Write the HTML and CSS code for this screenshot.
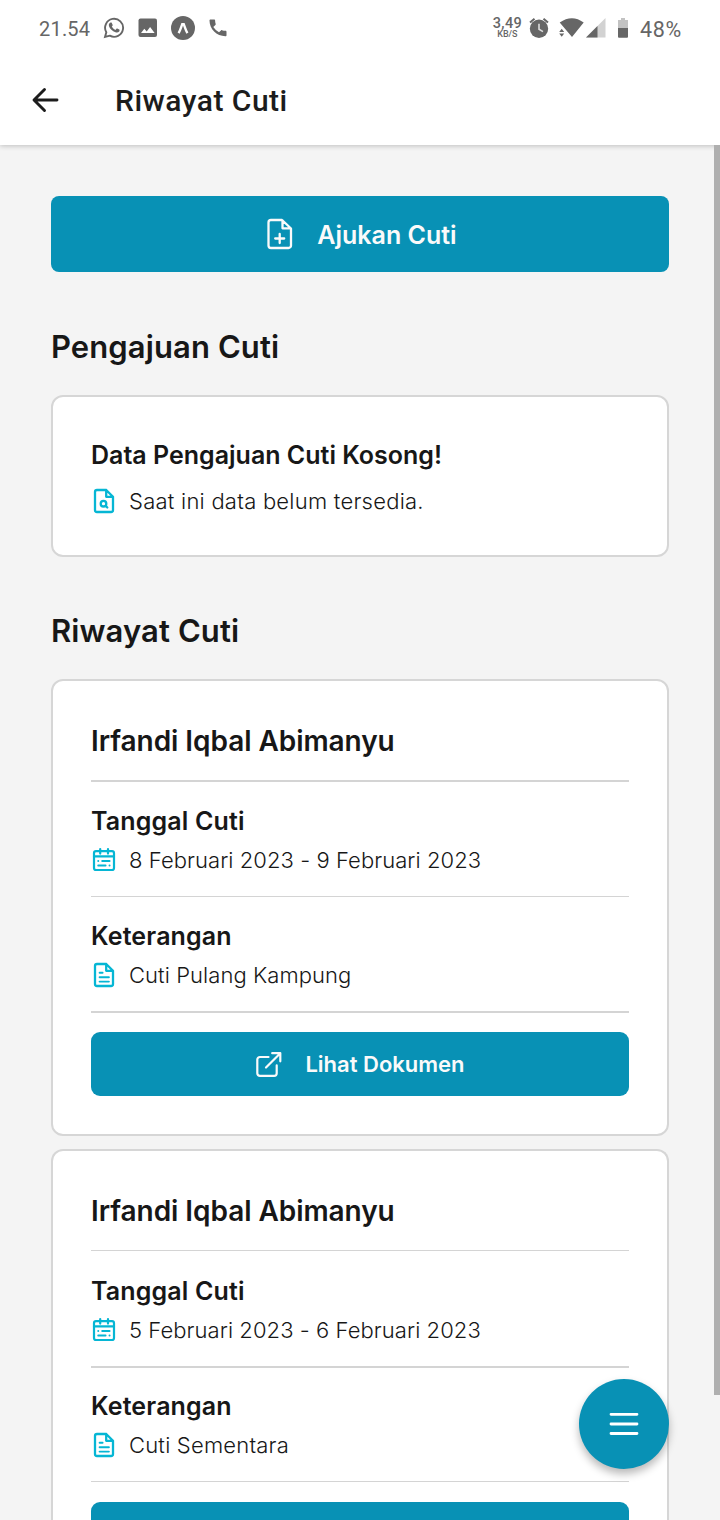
FILE: index.html
```html
<!DOCTYPE html>
<html lang="id">
<head>
<meta charset="utf-8">
<title>Riwayat Cuti</title>
<link rel="stylesheet" href="styles.css">
</head>
<body>
<svg class="defs" width="0" height="0">
  <symbol id="i-calendar" viewBox="0 0 26 26">
    <g fill="none" stroke="currentColor" stroke-width="2.2" stroke-linecap="round" stroke-linejoin="round">
      <rect x="3" y="4.2" width="20" height="18.8" rx="2"/>
      <path d="M3 9.3h20M9.2 2v4.6M17 2v4.6"/>
      <path stroke-width="1.9" d="M7.2 14h.1M11.2 14h7.4M7.2 18.5h7.4M18.5 18.5h.1"/>
    </g>
  </symbol>
  <symbol id="i-doc" viewBox="0 0 26 26">
    <g fill="none" stroke="currentColor" stroke-width="2.3" stroke-linecap="round" stroke-linejoin="round">
      <path d="M15.2 2H6a2 2 0 0 0-2 2v18a2 2 0 0 0 2 2h14a2 2 0 0 0 2-2V8.800zM15.200 2v6.800H22"/>
      <path stroke-width="1.9" d="M8.6 10.7h3M8.6 15.2h9.300M8.6 19.6h9.300"/>
    </g>
  </symbol>
  <symbol id="i-search-doc" viewBox="0 0 26 26">
    <g fill="none" stroke="currentColor" stroke-width="2.3" stroke-linecap="round" stroke-linejoin="round">
      <path d="M15.2 2H6a2 2 0 0 0-2 2v18a2 2 0 0 0 2 2h14a2 2 0 0 0 2-2V8.800zM15.200 2v6.800H22"/>
      <circle cx="12.5" cy="15.7" r="2.8"/><path d="M14.6 17.8l1.700 1.700"/>
    </g>
  </symbol>
  <symbol id="i-external" viewBox="0 0 28 28">
    <path fill="none" stroke="currentColor" stroke-width="2.2" stroke-linecap="round" stroke-linejoin="round" d="M13.500 7H4.900a2.600 2.600 0 0 0-2.600 2.600v13.700a2.600 2.600 0 0 0 2.600 2.600h14.200a2.600 2.600 0 0 0 2.600-2.600V15.400M11 17.500L25.300 3.200M17.200 3.200h8.100v8.100"/>
  </symbol>
</svg>

<div class="statusbar">
  <span class="clock">21.54</span>
  <svg class="st-wa" width="22" height="22" viewBox="0 0 22 22"><path d="M2 20l1.300-4.700A9 9 0 1 1 6.800 18.700z" fill="none" stroke="#666" stroke-width="1.900"/><path fill="#666" d="M7.500 5.600c.5-.3 1.100-.2 1.300.3l.9 2c.1.400 0 .7-.9 1.700.8 1.600 2 2.700 3.600 3.400l1.100-1.300c.2-.2.5-.3.800-.1l1.900.9c.6.300.5 1.200 0 1.900-.8 1-2.200 1.300-3.700.8-3.200-1-5.500-3.200-6.500-5.900-.5-1.500 0-3 1.500-3.700z"/></svg>
  <svg class="st-img" width="20" height="20" viewBox="0 0 20 20"><rect x=".5" y=".5" width="18.500" height="18.500" rx="2" fill="#666"/><path fill="#fff" d="M3 15l3.300-4.300 2.400 2.800 3.400-4.500 4.500 6z"/></svg>
  <svg class="st-expo" width="24" height="24" viewBox="0 0 24 24"><circle cx="12" cy="12" r="12" fill="#666"/><path d="M7.600 17.200C9 15 10 11.500 11.200 8.300h1.600c1.200 3.200 2.200 6.700 3.600 8.900" fill="none" stroke="#fff" stroke-width="2.400"/></svg>
  <svg class="st-phone" width="18" height="18" viewBox="0 0 18 18"><path fill="#666" d="M1.500.5h3.600c.6 0 1 .4 1 1 0 1.200.2 2.400.6 3.500.1.400 0 .8-.3 1L4.300 8.100a15 15 0 0 0 5.700 5.200l2-1.900c.3-.3.700-.4 1-.2 1.100.4 2.300.5 3.500.5.600 0 1 .5 1 1v3.500c0 .6-.4 1-1 1C7.500 17.200.5 10 .5 1.500c0-.6.500-1 1-1z"/></svg>
  <span class="spring"></span>
  <span class="speed"><b>3,49</b><small>KB/S</small></span>
  <svg class="st-alarm" width="20" height="22" viewBox="0 0 20 22"><circle cx="10" cy="11.800" r="9.200" fill="#666"/><path d="M1 5.500L5.500 1.800M19 5.500l-4.500-3.700" stroke="#666" stroke-width="2"/><path d="M10 6.800v5.500l4 2.300" fill="none" stroke="#ddd" stroke-width="1.600"/></svg>
  <svg class="st-wifi" width="25" height="20" viewBox="0 0 25 20"><path fill="#666" d="M.700 4.600Q13 -4.200 24.700 4.600L13 19zM.2 14l2.500-3.200L5.200 14zM.2 15.500h5L2.700 18.700z"/></svg>
  <svg class="st-signal" width="20" height="20" viewBox="0 0 20 20"><path fill="#d2d2d2" d="M0 19.500L19.500 0v19.500z"/><path fill="#666" d="M0 19.500L11.500 8v11.500z"/></svg>
  <svg class="st-batt" width="10" height="20" viewBox="0 0 10 20"><path fill="#c2c2c2" d="M0 2h3V0h4v2h3v8H0z"/><path fill="#666" d="M0 10h10v8.700a1 1 0 0 1-1 1H1a1 1 0 0 1-1-1z"/></svg>
  <span class="percent">48%</span>
</div>

<header class="appbar">
  <svg class="back" width="28" height="28" viewBox="0 0 28 28"><path d="M26 14H3.500M13.500 3.500L3 14l10.500 10.500" fill="none" stroke="#1c1c1c" stroke-width="2.900" stroke-linecap="round" stroke-linejoin="round"/></svg>
  <h1>Riwayat Cuti</h1>
</header>

<main class="content">
  <button class="btn btn-main">
    <svg width="28" height="32" viewBox="0 0 28 32"><path fill="none" stroke="currentColor" stroke-width="2.300" stroke-linecap="round" stroke-linejoin="round" d="M17 2H6a2.500 2.500 0 0 0-2.500 2.500v23A2.500 2.500 0 0 0 6 30h17.500a2.500 2.500 0 0 0 2.500-2.500V10.500zM17.500 2.500v7.800h8M14.700 16v9M10.200 20.500h9"/></svg>
    <span>Ajukan Cuti</span>
  </button>

  <h2>Pengajuan Cuti</h2>
  <section class="card empty">
    <h3 class="label">Data Pengajuan Cuti Kosong!</h3>
    <p class="value"><svg><use href="#i-search-doc"/></svg><span>Saat ini data belum tersedia.</span></p>
  </section>

  <h2 class="history">Riwayat Cuti</h2>
  <article class="card leave">
    <h3 class="name">Irfandi Iqbal Abimanyu</h3>
    <div class="field date thick">
      <h4 class="label">Tanggal Cuti</h4>
      <p class="value"><svg><use href="#i-calendar"/></svg><span>8 Februari 2023 - 9 Februari 2023</span></p>
    </div>
    <div class="field">
      <h4 class="label">Keterangan</h4>
      <p class="value"><svg><use href="#i-doc"/></svg><span>Cuti Pulang Kampung</span></p>
    </div>
    <div class="action thick">
      <button class="btn btn-doc"><svg width="28" height="28"><use href="#i-external"/></svg><span>Lihat Dokumen</span></button>
    </div>
  </article>
  <article class="card leave clipped">
    <h3 class="name">Irfandi Iqbal Abimanyu</h3>
    <div class="field date">
      <h4 class="label">Tanggal Cuti</h4>
      <p class="value"><svg><use href="#i-calendar"/></svg><span>5 Februari 2023 - 6 Februari 2023</span></p>
    </div>
    <div class="field thick">
      <h4 class="label">Keterangan</h4>
      <p class="value note"><svg><use href="#i-doc"/></svg><span>Cuti Sementara</span></p>
    </div>
    <div class="action">
      <button class="btn btn-doc" aria-label="Lihat Dokumen"></button>
    </div>
  </article>
</main>

<div class="scrollbar"></div>
<button class="fab" aria-label="Menu">
  <svg width="30" height="24" viewBox="0 0 30 24"><path d="M2 2.300h26M2 12h26M2 21.500h26" stroke="#fff" stroke-width="2.800" stroke-linecap="round"/></svg>
</button>
</body>
</html>
```
FILE: styles.css
```css
* { box-sizing: border-box; margin: 0; padding: 0; }
body {
  position: relative;
  height: 1520px;
  overflow: hidden;
  display: flex;
  flex-direction: column;
  background: #f4f4f4;
  color: #171717;
  font-family: Inter, "Liberation Sans", sans-serif;
}
.defs { position: absolute; }
svg { display: block; flex: none; }
button { border: 0; font-family: inherit; }

.statusbar {
  flex: none;
  height: 56px;
  padding: 0 38px 0 39px;
  display: flex;
  align-items: center;
  background: #fff;
  color: #666;
  font-family: Roboto, sans-serif;
}
.clock { letter-spacing: 0.2px; margin-top: 2px; font-size: 20px; }
.st-wa { margin-left: 13px; }
.st-img { margin-left: 13px; }
.st-expo { margin-left: 13px; }
.st-phone { margin-left: 14px; }
.spring { flex: 1; }
.speed { display: flex; flex-direction: column; align-items: center; }
.speed b { font-size: 14.5px; line-height: 12px; font-weight: 500; letter-spacing: 0.3px; }
.speed small { font-size: 9px; line-height: 9px; font-weight: 500; }
.st-alarm { margin-left: 7px; }
.st-wifi { margin-left: 10px; }
.st-signal { margin-left: 2px; }
.st-batt { margin-left: 12px; }
.percent { margin-left: 12px; margin-top: 2px; letter-spacing: 0.7px; font-size: 21.5px; }

.appbar {
  flex: none;
  height: 89px;
  padding-left: 31px;
  display: flex;
  align-items: center;
  gap: 56px;
  background: #fff;
  box-shadow: 0 1px 5px rgba(0, 0, 0, 0.22);
  clip-path: inset(0 0 -10px 0);
  z-index: 1;
}
.back { margin-bottom: 1px; }
.appbar h1 {
  font-family: Roboto, sans-serif;
  font-weight: 500;
  font-size: 30px;
  letter-spacing: 0.5px;
  color: #1c1c1c;
}

.content { flex: none; padding: 51px 51px 0; }
.btn {
  width: 100%;
  display: flex;
  align-items: center;
  justify-content: center;
  background: #0891b5;
  color: #fafafa;
  font-weight: 600;
}
.btn-main { height: 76px; border-radius: 8px; gap: 24px; font-size: 25px; padding-left: 2px; }
.btn-main span { padding-top: 2px; }
.btn-doc { height: 64px; border-radius: 9px; gap: 22px; font-size: 22px; }

h2 {
  height: 123px;
  padding-top: 55px;
  line-height: 40px;
  font-size: 31px;
  font-weight: 600;
  letter-spacing: 0.1px;
}
.history { height: 122px; padding-top: 54px; }
.card {
  background: #fff;
  border: 2px solid #d6d6d6;
  border-radius: 12px;
  padding: 38px;
}
.empty { height: 162px; }
.empty .label { line-height: 40px; letter-spacing: 0; }
.empty .value { margin-top: 6px; letter-spacing: 0.24px; }
.leave { height: 457px; }
.leave + .leave { margin-top: 13px; }
.name { height: 61px; line-height: 44px; font-size: 28px; font-weight: 600; letter-spacing: -0.06px; }
.field { height: 115px; padding-top: 20px; border-top: 1px solid #d4d4d4; }
.field .value { margin-top: -1px; }
.field.thick { padding-top: 19px; }
.field.date { height: 116px; padding-top: 21px; }
.field.date.thick { padding-top: 20px; }
.thick { border-top-width: 2px; }
.label { line-height: 39px; font-size: 25px; font-weight: 600; letter-spacing: 0.14px; }
.value {
  display: flex;
  align-items: center;
  gap: 12px;
  height: 40px;
  font-size: 22px;
  font-weight: 300;
  letter-spacing: 0.06px;
}
.value.note { letter-spacing: 0.2px; }
.value svg { width: 26px; height: 26px; color: #06b6d4; }
.action { height: 85px; padding-top: 20px; border-top: 1px solid #d4d4d4; }
.action.thick { border-top-width: 2px; padding-top: 19px; }

/* last card continues below the fold */
.clipped { height: 371px; padding-bottom: 0; border-bottom: 0; border-radius: 12px 12px 0 0; }
.clipped .action { height: 39px; }
.clipped .btn-doc { height: 18px; border-radius: 9px 9px 0 0; }

.scrollbar { position: absolute; right: 0; top: 145px; width: 6px; height: 1250px; background: #afafaf; z-index: 2; }
.fab {
  position: absolute;
  left: 579px;
  top: 1379px;
  width: 90px;
  height: 90px;
  border-radius: 50%;
  display: flex;
  align-items: center;
  justify-content: center;
  background: #0891b5;
  box-shadow: 0 5px 8px rgba(0, 0, 0, 0.28);
}
```
